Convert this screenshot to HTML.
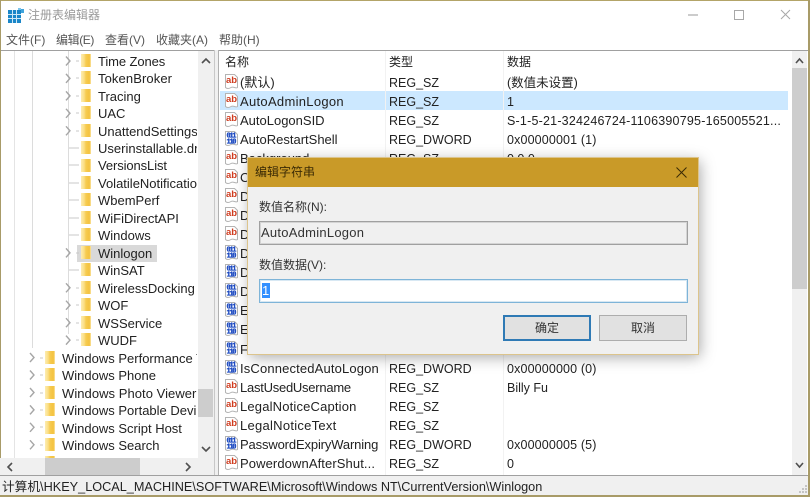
<!DOCTYPE html>
<html><head><meta charset="utf-8">
<style>
html,body{margin:0;padding:0}
body{width:810px;height:497px;position:relative;overflow:hidden;background:#fff;font-family:"Liberation Sans","Noto Sans CJK SC",sans-serif;font-size:13px;color:#222}
#w{position:absolute;left:0;top:0;width:810px;height:497px;filter:blur(.35px);background:#fff}
.a{position:absolute}
.t{position:absolute;white-space:nowrap;line-height:18px;height:18px}
.f{position:absolute;left:0;width:10px;height:13px;background:linear-gradient(90deg,#fdecb0 0,#fbdf88 30%,#f6cb50 50%,#f4c23f 85%,#fbe6a8 100%)}
.m{color:#555;font-size:12px}
.r{font-size:12.5px}
svg{position:absolute;overflow:visible}
</style></head><body><div id="w">
<svg width="0" height="0" style="position:absolute"><defs>
<g id="ab"><path d="M1.500 .5H10.500L13.500 3.500V13.500C11.500 15 9.500 12 7 13.500S3 15 1.500 13.500Z" fill="#fff" stroke="#b4b4b4" stroke-width="1"/><text x="2" y="9" font-size="9.500" font-weight="bold" fill="#cf3b1e" font-family="Liberation Sans">ab</text></g>
<g id="dw"><path d="M1.500 .5H10.500L13.500 3.500V13.500C11.500 15 9.500 12 7 13.500S3 15 1.500 13.500Z" fill="#fff" stroke="#b4b4b4" stroke-width="1"/><text x="2.500" y="6.700" font-size="7" font-weight="bold" fill="#1a48c0" stroke="#1a48c0" stroke-width=".3" font-family="Liberation Mono" textLength="10">011</text><text x="2.500" y="12.700" font-size="7" font-weight="bold" fill="#1a48c0" stroke="#1a48c0" stroke-width=".3" font-family="Liberation Mono" textLength="10">110</text></g>
<path id="c" d="M0 0L4 4.500L0 9" fill="none" stroke="#a6a6a6" stroke-width="1.400"/>
</defs></svg>

<!-- window frame -->
<div class="a" style="left:0;top:0;width:810px;height:1px;background:#b3a468"></div>
<div class="a" style="left:0;top:0;width:1px;height:497px;background:#a89b68"></div>
<div class="a" style="left:808px;top:0;width:2px;height:497px;background:#a89b68"></div>
<div class="a" style="left:0;top:495px;width:810px;height:2px;background:#a89b68"></div>

<!-- title bar -->
<svg style="left:8px;top:8px" width="16" height="16">
<rect x="0" y="2" width="13" height="13" fill="#1a86c8"/>
<path d="M0 6.500H13M0 10.500H13M4.500 2V15M8.500 2V15" stroke="#cfe8f6" stroke-width="1"/>
<rect x="13" y="1" width="3" height="4" fill="#3fa4dc"/><rect x="10" y="0" width="3" height="2" fill="#7cc4ea"/>
</svg>
<div class="t" style="left:28px;top:6px;font-size:12px;color:#9a9a9a">注册表编辑器</div>
<svg style="left:688px;top:10px" width="110" height="12">
<path d="M0 5H10" stroke="#999" stroke-width="1"/>
<rect x="46.500" y="0.500" width="9" height="9" fill="none" stroke="#a8a8a8"/>
<path d="M93 0L102 9M102 0L93 9" stroke="#a8a8a8" stroke-width="1"/>
</svg>

<!-- menu -->
<div class="t m" style="left:6px;top:31px">文件(F)</div>
<div class="t m" style="left:56px;top:31px;letter-spacing:-.4px">编辑(E)</div>
<div class="t m" style="left:105px;top:31px">查看(V)</div>
<div class="t m" style="left:156px;top:31px">收藏夹(A)</div>
<div class="t m" style="left:219px;top:31px">帮助(H)</div>

<!-- panels -->
<div class="a" style="left:1px;top:50px;width:214px;height:1px;background:#a0a0a0"></div>
<div class="a" style="left:219px;top:50px;width:589px;height:1px;background:#a0a0a0"></div>
<div class="a" style="left:215px;top:50px;width:4px;height:426px;background:#f0f0f0"></div>
<div class="a" style="left:218px;top:50px;width:1px;height:426px;background:#b0b0b0"></div>
<div class="a" style="left:214px;top:50px;width:1px;height:426px;background:#c8c8c8"></div>
<div class="a" style="left:0;top:475px;width:808px;height:20px;background:#f0f0f0;border-top:1px solid #a0a0a0;box-sizing:border-box"></div>
<div class="t" style="left:2px;top:478px;font-size:12.700px;color:#222">计算机\HKEY_LOCAL_MACHINE\SOFTWARE\Microsoft\Windows NT\CurrentVersion\Winlogon</div>
<svg style="left:798px;top:484px" width="10" height="10"><path d="M7 1h2v2h-2zM4 4h2v2H4zM7 4h2v2H7zM1 7h2v2H1zM4 7h2v2H4zM7 7h2v2H7z" fill="#c4c4c4"/></svg>

<!-- left tree -->
<div class="a" style="left:0;top:51px;width:198px;height:407px;overflow:hidden">
<div class="a" style="left:14px;top:0;width:1px;height:407px;background:#e4e4e4"></div>
<div class="a" style="left:32px;top:0;width:1px;height:297px;background:#dcdcdc"></div>
<div class="a" style="left:68px;top:0;width:1px;height:283px;background:#dcdcdc"></div>
<div class="a" style="left:77px;top:194px;width:80px;height:17px;background:#d9d9d9"></div>
</div>
<svg style="left:0;top:51px" width="198" height="407">
<g fill="none">
<use href="#c" x="66" y="5.500"/><use href="#c" x="66" y="22.900"/><use href="#c" x="66" y="40.400"/><use href="#c" x="66" y="57.800"/><use href="#c" x="66" y="75.300"/>
<use href="#c" x="66" y="197.400"/>
<use href="#c" x="66" y="232.300"/><use href="#c" x="66" y="249.700"/><use href="#c" x="66" y="267.200"/><use href="#c" x="66" y="284.600"/>
<use href="#c" x="30" y="302"/><use href="#c" x="30" y="319.500"/><use href="#c" x="30" y="337"/><use href="#c" x="30" y="354.400"/><use href="#c" x="30" y="371.800"/><use href="#c" x="30" y="389.300"/>
</g>
<path d="M76 10h3M76 27h3M76 45h3M76 62h3M76 80h3M69 97h10M69 114h10M69 132h10M69 149h10M69 167h10M69 184h10M76 202h3M69 219h10M76 237h3M76 254h3M76 272h3M76 289h3M40 307h3M40 324h3M40 342h3M40 359h3M40 376h3M40 394h3" stroke="#c8c8c8" stroke-width="1"/>
</svg>
<div class="a" style="left:81px;top:51px;width:10px;height:300px">
<div class="f" style="top:3px"></div><div class="f" style="top:20px"></div><div class="f" style="top:38px"></div><div class="f" style="top:55px"></div><div class="f" style="top:73px"></div><div class="f" style="top:90px"></div><div class="f" style="top:108px"></div><div class="f" style="top:125px"></div><div class="f" style="top:142px"></div><div class="f" style="top:160px"></div><div class="f" style="top:177px"></div><div class="f" style="top:195px"></div><div class="f" style="top:212px"></div><div class="f" style="top:230px"></div><div class="f" style="top:247px"></div><div class="f" style="top:265px"></div><div class="f" style="top:282px"></div>
</div>
<div class="a" style="left:45px;top:51px;width:10px;height:407px;overflow:hidden">
<div class="f" style="top:300px"></div><div class="f" style="top:317px"></div><div class="f" style="top:335px"></div><div class="f" style="top:352px"></div><div class="f" style="top:370px"></div><div class="f" style="top:387px"></div><div class="f" style="top:405px"></div>
</div>
<div class="a" style="left:98px;top:52px;width:99px;height:300px;overflow:hidden">
<div class="t" style="left:0;top:1px;letter-spacing:-.1px">Time Zones</div>
<div class="t" style="left:0;top:18px;letter-spacing:.1px">TokenBroker</div>
<div class="t" style="left:0;top:36px">Tracing</div>
<div class="t" style="left:0;top:53px">UAC</div>
<div class="t" style="left:0;top:71px">UnattendSettings</div>
<div class="t" style="left:0;top:88px">Userinstallable.dr</div>
<div class="t" style="left:0;top:105px;letter-spacing:-.1px">VersionsList</div>
<div class="t" style="left:0;top:123px">VolatileNotificatio</div>
<div class="t" style="left:0;top:140px">WbemPerf</div>
<div class="t" style="left:0;top:158px">WiFiDirectAPI</div>
<div class="t" style="left:0;top:175px">Windows</div>
<div class="t" style="left:0;top:193px">Winlogon</div>
<div class="t" style="left:0;top:210px">WinSAT</div>
<div class="t" style="left:0;top:228px">WirelessDocking</div>
<div class="t" style="left:0;top:245px">WOF</div>
<div class="t" style="left:0;top:263px">WSService</div>
<div class="t" style="left:0;top:280px">WUDF</div>
</div>
<div class="a" style="left:62px;top:52px;width:135px;height:406px;overflow:hidden">
<div class="t" style="left:0;top:298px">Windows Performance T</div>
<div class="t" style="left:0;top:315px">Windows Phone</div>
<div class="t" style="left:0;top:333px;letter-spacing:.05px">Windows Photo Viewer</div>
<div class="t" style="left:0;top:350px">Windows Portable Devi</div>
<div class="t" style="left:0;top:368px">Windows Script Host</div>
<div class="t" style="left:0;top:385px">Windows Search</div>
</div>

<!-- left scrollbars -->
<div class="a" style="left:198px;top:51px;width:16px;height:407px;background:#f0f0f0"></div>
<div class="a" style="left:198px;top:389px;width:15px;height:28px;background:#cdcdcd"></div>
<svg style="left:198px;top:51px" width="16" height="407">
<path d="M4 12L8 8L12 12" fill="none" stroke="#505050" stroke-width="1.600"/>
<path d="M4 396L8 400L12 396" fill="none" stroke="#505050" stroke-width="1.600"/>
</svg>
<div class="a" style="left:0;top:458px;width:214px;height:17px;background:#f0f0f0"></div>
<div class="a" style="left:45px;top:458px;width:95px;height:17px;background:#cdcdcd"></div>
<svg style="left:0;top:458px" width="214" height="17">
<path d="M12 5L8 9L12 13M186 5L190 9L186 13" fill="none" stroke="#505050" stroke-width="1.600"/>
</svg>

<!-- right list -->
<div class="a" style="left:220px;top:91px;width:568px;height:19px;background:#cce8ff"></div>
<div class="a" style="left:385px;top:51px;width:1px;height:424px;background:#f2f2f2"></div>
<div class="a" style="left:503px;top:51px;width:1px;height:424px;background:#f2f2f2"></div>
<div class="t" style="left:225px;top:53px;font-size:12px">名称</div>
<div class="t" style="left:389px;top:53px;font-size:12px">类型</div>
<div class="t" style="left:507px;top:53px;font-size:12px">数据</div>

<svg style="left:224px;top:74px" width="15" height="400">
<use href="#ab" y="0"/><use href="#ab" y="19"/><use href="#ab" y="38"/><use href="#dw" y="57"/><use href="#ab" y="76"/><use href="#ab" y="95"/><use href="#ab" y="114"/><use href="#ab" y="133"/><use href="#ab" y="152"/><use href="#dw" y="171"/><use href="#dw" y="190"/><use href="#dw" y="209"/><use href="#dw" y="228"/><use href="#dw" y="247"/><use href="#dw" y="267"/><use href="#dw" y="286"/><use href="#ab" y="305"/><use href="#ab" y="324"/><use href="#ab" y="343"/><use href="#dw" y="362"/><use href="#ab" y="381"/>
</svg>

<div class="t" style="left:240px;top:74px">(默认)</div>
<div class="t" style="left:240px;top:93px;letter-spacing:.3px">AutoAdminLogon</div>
<div class="t" style="left:240px;top:112px">AutoLogonSID</div>
<div class="t" style="left:240px;top:131px">AutoRestartShell</div>
<div class="t" style="left:240px;top:150px">Background</div>
<div class="t" style="left:240px;top:169px">C</div>
<div class="t" style="left:240px;top:188px">D</div>
<div class="t" style="left:240px;top:207px">D</div>
<div class="t" style="left:240px;top:226px">D</div>
<div class="t" style="left:240px;top:245px">D</div>
<div class="t" style="left:240px;top:264px">D</div>
<div class="t" style="left:240px;top:283px">D</div>
<div class="t" style="left:240px;top:302px">E</div>
<div class="t" style="left:240px;top:321px">E</div>
<div class="t" style="left:240px;top:341px">F</div>
<div class="t" style="left:240px;top:360px;letter-spacing:.15px">IsConnectedAutoLogon</div>
<div class="t" style="left:240px;top:379px;letter-spacing:-.25px">LastUsedUsername</div>
<div class="t" style="left:240px;top:398px;letter-spacing:.17px">LegalNoticeCaption</div>
<div class="t" style="left:240px;top:417px;letter-spacing:.27px">LegalNoticeText</div>
<div class="t" style="left:240px;top:436px;letter-spacing:-.14px">PasswordExpiryWarning</div>
<div class="t" style="left:240px;top:455px;letter-spacing:.1px">PowerdownAfterShut...</div>

<div class="t r" style="left:389px;top:74px">REG_SZ</div>
<div class="t r" style="left:389px;top:93px">REG_SZ</div>
<div class="t r" style="left:389px;top:112px">REG_SZ</div>
<div class="t r" style="left:389px;top:131px">REG_DWORD</div>
<div class="t r" style="left:389px;top:150px">REG_SZ</div>
<div class="t r" style="left:389px;top:360px">REG_DWORD</div>
<div class="t r" style="left:389px;top:379px">REG_SZ</div>
<div class="t r" style="left:389px;top:398px">REG_SZ</div>
<div class="t r" style="left:389px;top:417px">REG_SZ</div>
<div class="t r" style="left:389px;top:436px">REG_DWORD</div>
<div class="t r" style="left:389px;top:455px">REG_SZ</div>

<div class="t r" style="left:507px;top:74px">(数值未设置)</div>
<div class="t r" style="left:507px;top:93px">1</div>
<div class="t r" style="left:507px;top:112px;letter-spacing:.21px">S-1-5-21-324246724-1106390795-165005521...</div>
<div class="t r" style="left:507px;top:131px;letter-spacing:.14px">0x00000001 (1)</div>
<div class="t r" style="left:507px;top:150px">0 0 0</div>
<div class="t r" style="left:507px;top:360px;letter-spacing:.14px">0x00000000 (0)</div>
<div class="t r" style="left:507px;top:379px">Billy Fu</div>
<div class="t r" style="left:507px;top:436px;letter-spacing:.14px">0x00000005 (5)</div>
<div class="t r" style="left:507px;top:455px">0</div>

<!-- right scrollbar -->
<div class="a" style="left:792px;top:51px;width:15px;height:424px;background:#f0f0f0"></div>
<div class="a" style="left:792px;top:68px;width:15px;height:221px;background:#cdcdcd"></div>
<svg style="left:792px;top:51px" width="15" height="424">
<path d="M4 12L7.500 8L11 12" fill="none" stroke="#505050" stroke-width="1.600"/>
<path d="M4 412L7.500 416L11 412" fill="none" stroke="#505050" stroke-width="1.600"/>
</svg>

<!-- dialog -->
<div class="a" style="left:248px;top:158px;width:450px;height:196px;background:#f0f0f0;box-shadow:2px 3px 14px rgba(0,0,0,.35);outline:1px solid #dcc48c"></div>
<div class="a" style="left:248px;top:158px;width:450px;height:29px;background:#c99a28"></div>
<div class="t" style="left:255px;top:163px;font-size:12px;color:#3a2a05">编辑字符串</div>
<svg style="left:676px;top:167px" width="11" height="11"><path d="M0.500 0.500L10.500 10.500M10.500 0.500L0.500 10.500" stroke="#3a2a05" stroke-width="1"/></svg>
<div class="t" style="left:259px;top:198px;font-size:12px;color:#333">数值名称(N):</div>
<div class="a" style="left:259px;top:221px;width:429px;height:24px;box-sizing:border-box;border:1px solid #a0a0a0;box-shadow:inset 0 0 0 1px rgba(160,160,160,.35);background:#f0f0f0"></div>
<div class="t" style="left:261px;top:224px;color:#333;letter-spacing:.25px">AutoAdminLogon</div>
<div class="t" style="left:259px;top:256px;font-size:12px;color:#333">数值数据(V):</div>
<div class="a" style="left:259px;top:279px;width:429px;height:24px;box-sizing:border-box;border:1px solid #7eb4d8;box-shadow:inset 0 0 0 1px rgba(126,180,216,.3);background:#fff"></div>
<div class="a" style="left:262px;top:283px;width:8px;height:15px;background:#3390ff"></div>
<div class="t" style="left:262px;top:282px;color:#fff">1</div>
<div class="a" style="left:503px;top:315px;width:88px;height:26px;box-sizing:border-box;border:2px solid #2f7ab5;background:#e1e1e1;text-align:center;line-height:23px;font-size:12px;color:#333">确定</div>
<div class="a" style="left:599px;top:315px;width:88px;height:26px;box-sizing:border-box;border:1px solid #adadad;background:#e1e1e1;text-align:center;line-height:25px;font-size:12px;color:#333">取消</div>
</div></body></html>
